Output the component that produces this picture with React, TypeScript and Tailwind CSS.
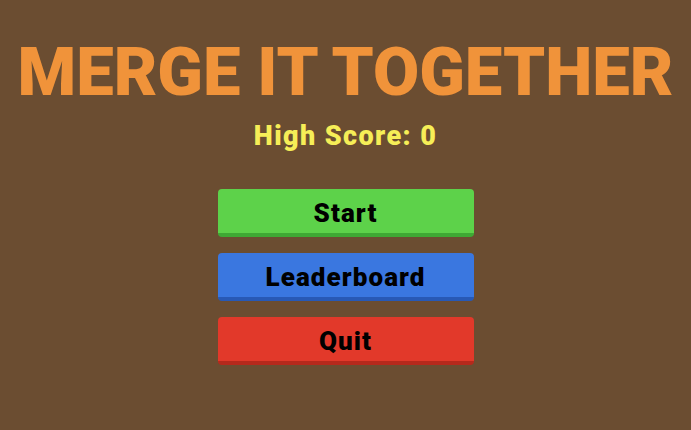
const buttons = [
  { label: 'Start', className: 'bg-[#5dd24a] border-[#3fa834]' },
  { label: 'Leaderboard', className: 'bg-[#3a77e0] border-[#2859b5]' },
  { label: 'Quit', className: 'bg-[#e2392a] border-[#b5291c]' },
];

export default function App() {
  return (
    <div
      className="flex flex-col items-center w-[691px] h-[430px] bg-[#6b4d31] pt-[39px]"
      style={{ fontFamily: 'Roboto, "Liberation Sans", sans-serif' }}
    >
      <h1 className="text-[67px] leading-none font-black text-[#f0933a] whitespace-nowrap">
        MERGE IT TOGETHER
      </h1>
      <p className="mt-[17px] text-[27px] leading-none font-black tracking-[1.4px] text-[#f6ee57]">
        High Score: 0
      </p>
      <div className="flex flex-col gap-4 mt-[39px]">
        {buttons.map((b) => (
          <button
            key={b.label}
            className={`w-[256px] h-[48px] pt-[4px] rounded-[4px] border-b-4 text-[26px] leading-none font-black tracking-[1.1px] text-black ${b.className}`}
          >
            {b.label}
          </button>
        ))}
      </div>
    </div>
  );
}
